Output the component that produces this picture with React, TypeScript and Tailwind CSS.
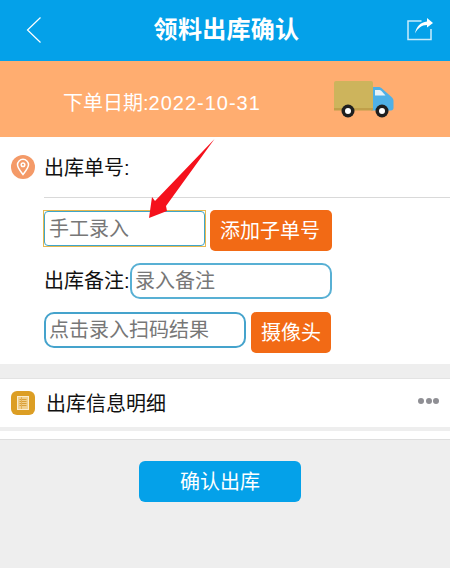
import React from "react";

const cjk = "font-['Liberation_Sans','Noto_Sans_CJK_SC',sans-serif]";

function Truck() {
  return (
    <svg width="62" height="38" viewBox="0 0 62 38">
      <path d="M38 7h7c2 0 3 .6 4.500 2l9 8c1.500 1.300 2 2.500 2 4v7c0 1.500-1 2.500-2.500 2.500H38z" fill="#4fb0e6" />
      <path d="M42 10h4c1 0 1.500.3 2.500 1l4 4.500H42z" fill="#e8f2f8" />
      <rect x="1" y="1" width="39" height="29" rx="2" fill="#cdb45c" />
      <rect x="1" y="28" width="39" height="2.500" fill="#c09f4a" />
      <circle cx="15" cy="31" r="6.500" fill="#1f1f1f" />
      <circle cx="15" cy="31" r="3" fill="#ffffff" />
      <circle cx="49" cy="31" r="6.500" fill="#1f1f1f" />
      <circle cx="49" cy="31" r="3" fill="#ffffff" />
    </svg>
  );
}

function Pin() {
  return (
    <div className="w-6 h-6 rounded-full bg-[#f49a68] flex items-center justify-center shrink-0">
      <svg width="14" height="18" viewBox="0 0 14 18" fill="none" stroke="#fff" strokeWidth="1.500">
        <path d="M7 16.500C4 12.500 1.500 9.800 1.500 6.800a5.500 5.500 0 0 1 11 0C12.500 9.800 10 12.500 7 16.500z" />
        <circle cx="7" cy="6.800" r="1.800" />
      </svg>
    </div>
  );
}

function Ledger() {
  return (
    <div className="w-6 h-6 rounded-md bg-[#dc9e24] flex items-center justify-center shrink-0">
      <svg width="12" height="14" viewBox="0 0 12 14" fill="none">
        <rect x="0.500" y="0.500" width="11" height="13" fill="#f0cf8c" stroke="#fbeccb" />
        <path d="M2.500 3.500h7M2.500 5.500h7M2.500 7.500h7M2.500 9.500h7" stroke="#d9a037" strokeWidth="1" />
        <path d="M4.500 1v12" stroke="#e3b055" strokeWidth="1" />
      </svg>
    </div>
  );
}

export default function App() {
  return (
    <div className={`relative w-[450px] h-[568px] overflow-hidden bg-[#eeeeee] ${cjk}`}>
      <header className="h-[61px] bg-[#04a1e9] flex items-center justify-between pl-[26px] pr-[17px]">
        <svg className="mb-[1px]" width="16" height="28" viewBox="0 0 16 28" fill="none" stroke="#fff" strokeWidth="1.200">
          <path d="M14.500 1.500 1.500 14l13 12.500" />
        </svg>
        <h1 className="text-white text-[24px] font-bold leading-none tracking-[0.3px] ml-[4px] mb-[1px]">领料出库确认</h1>
        <svg className="mt-[-3px]" width="26" height="24" viewBox="0 0 26 24" fill="none" stroke="#c9ecfb" strokeWidth="1.500">
          <path d="M14.500 4H1v18.500h23V12" />
          <path d="M8 16.500C9 10 13.500 5 20 4.500V1l6 5-6 4.500V8C14.500 8 11 11 8 16.500z" fill="#fff" stroke="none" />
        </svg>
      </header>

      <section className="h-[76px] bg-[#ffad70] flex items-center pl-[63px] pr-[55px] justify-between">
        <span className="text-white text-[20px] leading-none mt-[8px]">
          下单日期:<span className="tracking-[1px]">2022-10-31</span>
        </span>
        <Truck />
      </section>

      <section className="h-[227px] bg-white flex flex-col">
        <div className="h-[60px] flex items-center pl-[11px] gap-[9px]">
          <Pin />
          <span className="text-[20px] text-[#111] leading-none mt-[1px]">出库单号:</span>
        </div>
        <div className="ml-[44px] h-px bg-[#d9d9d9]" />
        <div className="pl-[43px] pt-[12px] flex gap-[4px] items-start">
          <div className="w-[163px] h-[37px] border border-[#e6b84f] p-0">
            <input
              readOnly
              placeholder="手工录入"
              className="w-full h-full border border-[#3fa5c9] rounded-[4px] bg-white pl-[4px] pt-[2px] text-[20px] placeholder:text-[#777] outline-none"
            />
          </div>
          <button className="w-[122px] h-[41px] rounded-[5px] bg-[#f26a15] text-white text-[20px] leading-none pr-[2px]">添加子单号</button>
        </div>
        <div className="pl-[44px] pt-[12px] flex items-center">
          <span className="text-[20px] text-[#111] leading-none w-[86px] whitespace-nowrap">出库备注:</span>
          <input
            readOnly
            placeholder="录入备注"
            className="w-[202px] h-[36px] border-2 border-[#58b0d4] rounded-[10px] bg-white pl-[3px] text-[20px] placeholder:text-[#777] outline-none"
          />
        </div>
        <div className="pl-[44px] pt-[13px] flex gap-[5px] items-start">
          <input
            readOnly
            placeholder="点击录入扫码结果"
            className="w-[202px] h-[36px] border-2 border-[#45a3cc] rounded-[10px] bg-white pl-[3px] text-[20px] placeholder:text-[#777] outline-none"
          />
          <button className="w-[80px] h-[41px] rounded-[5px] bg-[#f26a15] text-white text-[20px] leading-none">摄像头</button>
        </div>
      </section>

      <section className="mt-[14px] border-t border-[#e3e3e3] bg-white h-[49px] flex items-center pl-[11px] pr-[11px]">
        <Ledger />
        <span className="ml-[11px] text-[20px] text-[#111] leading-none mt-[1px]">出库信息明细</span>
        <div className="ml-auto flex gap-[1.500px] mb-[4px]">
          <span className="w-[6px] h-[6px] rounded-full bg-[#8f8f94]" />
          <span className="w-[6px] h-[6px] rounded-full bg-[#8f8f94]" />
          <span className="w-[6px] h-[6px] rounded-full bg-[#8f8f94]" />
        </div>
      </section>
      <div className="h-[4px] bg-[#eeeeee]" />
      <div className="h-[9px] bg-white border-b border-[#dedede]" />

      <div className="flex pt-[21px] pl-[139px]">
        <button className="w-[162px] h-[41px] rounded-[6px] bg-[#04a1e9] text-white text-[20px] leading-none">确认出库</button>
      </div>

      <svg className="absolute left-[145px] top-[136px]" width="72" height="86" viewBox="0 0 72 86">
        <path d="M69.500 3 21 70 L22 75 L4 82 L7 61 L10 65 Z" fill="#f5111c" />
      </svg>
    </div>
  );
}
